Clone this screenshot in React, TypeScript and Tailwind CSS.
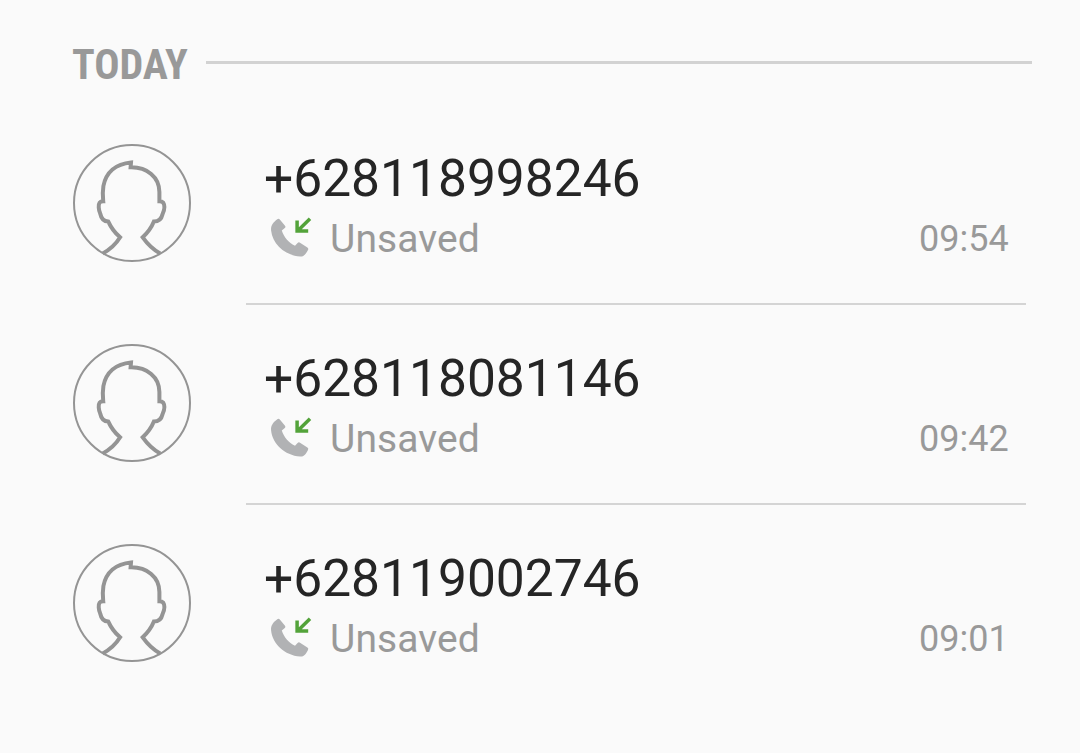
import React from 'react';

interface Call {
  number: string;
  label: string;
  time: string;
}

const calls: Call[] = [
  { number: '+628118998246', label: 'Unsaved', time: '09:54' },
  { number: '+628118081146', label: 'Unsaved', time: '09:42' },
  { number: '+628119002746', label: 'Unsaved', time: '09:01' },
];

const Avatar: React.FC = () => (
  <svg viewBox="0 0 118 118" className="w-[118px] h-[118px] shrink-0" fill="none" stroke="#949494">
    <circle cx="59" cy="59" r="58" strokeWidth="2" />
    <path
      d="M29.8 109.4 C37 105.5 43 100 47.1 93.3 C41.5 88.5 38 83.5 35.3 77.6 C30.5 77.4 28.1 74 27.2 69.5 C25.5 65.5 25.2 60.5 26.6 58.6 Q27.6 57.2 30.2 57.2 C29.6 52 29.6 47 30.4 42 C33 28 43 19.8 58 18.4 L57.6 23.3 C74 23 86.4 33 86.4 48 V57.2 Q89 57.2 90.2 58.6 C91.8 61 91.4 66 89.6 70 C88.6 74.5 85.5 77.6 80.9 77.6 C78.5 83.5 75 88.5 69.7 93.3 C74.5 100 80 105.5 87.2 109.4"
      strokeWidth="4"
    />
  </svg>
);

const IncomingCallIcon: React.FC = () => (
  <svg viewBox="0 0 46 42" className="w-[46px] h-[42px] mb-1 shrink-0" fill="none">
    <path
      d="M9.3 3.3 Q10.6 2.3 11.8 3.5 L17 9.7 Q18 11 16.8 12.1 L13.8 14.4 C16 21 20.5 26.5 27 29.7 L29.6 27 Q30.7 25.9 32 26.7 L39.4 31.6 Q40.8 32.6 40 33.9 C38.2 37.5 35.8 40.9 32.2 40.6 C16.5 39.3 4.5 28 3.1 14.5 C2.6 9.5 5.2 6.4 9.3 3.3 Z"
      fill="#b1b2b4"
    />
    <path d="M42 2.7 L30 14.4 M29.1 4.4 V15 H40.2" stroke="#53a33a" strokeWidth="3.5" />
  </svg>
);

const CallRow: React.FC<{ call: Call; last: boolean }> = ({ call, last }) => (
  <li className="flex h-[200px] pl-[73px] pr-[54px]">
    <div className="pt-[39px] pr-[55px]">
      <Avatar />
    </div>
    <div className={`flex-1 pl-[18px] pr-[18px] pt-[44px] ${last ? '' : 'border-b-2 border-[#d4d4d4]'}`}>
      <div className="text-[51.5px] leading-[60px] text-[#252525]">{call.number}</div>
      <div className="flex items-center h-[60px] pl-1">
        <IncomingCallIcon />
        <span className="ml-4 text-[39px] leading-[60px] tracking-[0.1px] text-[#999999]">{call.label}</span>
        <span className="ml-auto w-[90px] pl-px text-[36px] leading-[60px] text-[#999999]">{call.time}</span>
      </div>
    </div>
  </li>
);

export default function App() {
  return (
    <div className="w-[1080px] h-[753px] overflow-hidden bg-[#fafafa] font-['Roboto',sans-serif]">
      <header className="flex items-center h-[105px] pl-[72px] pr-12 pb-5 pt-10">
        <h2 className="w-[134px] shrink-0 pt-[5px] text-[42px] leading-none font-bold text-[#999999] font-['Roboto_Condensed','Roboto',sans-serif] [font-stretch:75%]">
          TODAY
        </h2>
        <div className="h-[3px] flex-1 bg-[#d2d2d2]" />
      </header>
      <ul>
        {calls.map((call, i) => (
          <CallRow key={call.number} call={call} last={i === calls.length - 1} />
        ))}
      </ul>
    </div>
  );
}
